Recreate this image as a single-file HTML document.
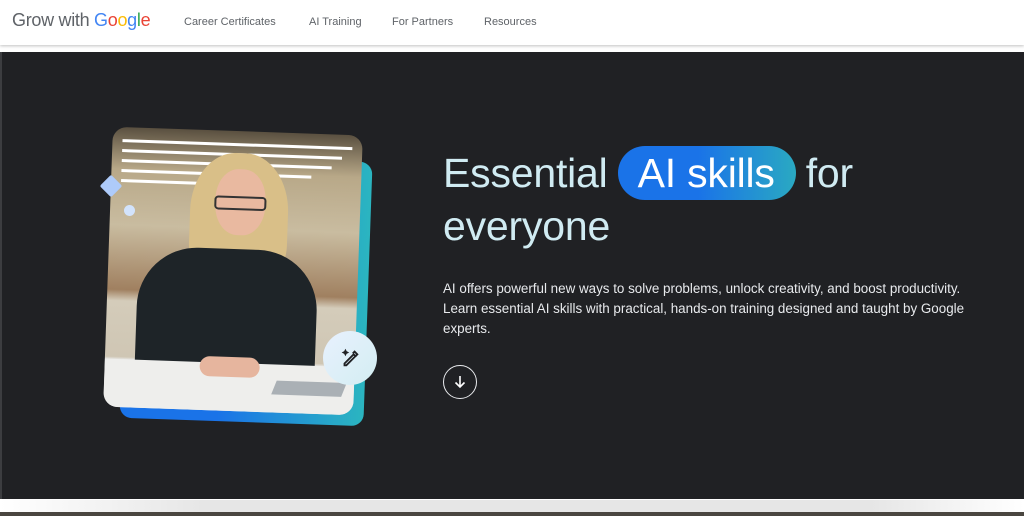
<!DOCTYPE html>
<html><head><meta charset="utf-8"><style>
*{margin:0;padding:0;box-sizing:border-box}
body{width:1024px;height:516px;overflow:hidden;background:#fff;font-family:"Liberation Sans",sans-serif;position:relative}
.hdr{position:absolute;left:0;top:0;width:1024px;height:45px;background:#fff;box-shadow:0 1px 3px rgba(0,0,0,.25)}
.logo{position:absolute;left:12px;top:10px;font-size:18px;color:#5f6368;letter-spacing:-.3px}
.logo b{font-weight:normal}
.nav{position:absolute;top:16px;font-size:11px;color:#5f6368}
.hero{position:absolute;left:0;top:52px;width:1024px;height:447px;background:#202124;border-left:2px solid #3c3d40}
.bot{position:absolute;left:0;top:500px;width:1024px;height:12px;background:linear-gradient(90deg,#fff 0,#e6e6e6 20%,#e6e6e6 85%,#fff 100%);border-radius:4px 0 0 4px}
.bot2{position:absolute;left:0;top:512px;width:1024px;height:4px;background:#4a4640}
.back{position:absolute;left:124px;top:158px;width:244px;height:264px;border-radius:12px;background:linear-gradient(90deg,#1a73e8 0%,#1a73e8 40%,#2bb5c0 100%);transform:rotate(2deg)}
.photo{position:absolute;left:108px;top:131px;width:250px;height:280px;border-radius:14px;overflow:hidden;transform:rotate(2deg);background:linear-gradient(180deg,#5a5040 0%,#b8a888 15%,#c9bca0 35%,#a08060 58%,#d4ccba 62%,#cfc6b4 82%,#e9e9e8 83%,#f0f0ef 100%)}
.light{position:absolute;height:3px;background:#fff;left:10px}
.hair{position:absolute;left:80px;top:22px;width:98px;height:130px;border-radius:45% 45% 30% 30%;background:#d9bf88}
.face{position:absolute;left:105px;top:38px;width:50px;height:66px;border-radius:45%;background:#e9b9a0}
.glass{position:absolute;left:104px;top:65px;width:52px;height:14px;border:2px solid #333;border-radius:4px}
.body{position:absolute;left:30px;top:118px;width:180px;height:150px;border-radius:60px 60px 10px 10px;background:#1e2428}
.table{position:absolute;left:0;top:232px;width:250px;height:60px;background:#eeeeec}
.hands{position:absolute;left:95px;top:226px;width:60px;height:20px;border-radius:10px;background:#e6b59e}
.lap{position:absolute;left:170px;top:248px;width:70px;height:14px;background:#aab0b5;transform:skewX(-20deg)}
.dia{position:absolute;left:103px;top:178px;width:16px;height:16px;background:#aecbfa;transform:rotate(45deg);border-radius:2px}
.dot{position:absolute;left:124px;top:205px;width:11px;height:11px;border-radius:50%;background:#d2e3fc}
.magic{position:absolute;left:323px;top:331px;width:54px;height:54px;border-radius:50%;background:linear-gradient(135deg,#e8f0fe,#d3eef2);display:flex;align-items:center;justify-content:center}
h1{position:absolute;left:443px;top:146px;font-weight:normal;font-size:41px;line-height:53px;color:#d0ebf2;letter-spacing:-.2px;white-space:nowrap}
.pill{display:inline-block;background:linear-gradient(90deg,#1a73e8 0%,#1a73e8 45%,#2aa9c2 100%);color:#fff;border-radius:28px;padding:0 21px 0 20px;line-height:54px;margin:0 10px 0 10px}
p{position:absolute;left:443px;top:279px;width:530px;font-size:13.4px;line-height:20px;color:#e8eaed}
.down{position:absolute;left:443px;top:365px;width:34px;height:34px;border:1.5px solid #e8eaed;border-radius:50%;display:flex;align-items:center;justify-content:center}
</style></head><body>
<div class="hdr">
<div class="logo">Grow with <b style="color:#4285f4">G</b><b style="color:#ea4335">o</b><b style="color:#fbbc05">o</b><b style="color:#4285f4">g</b><b style="color:#34a853">l</b><b style="color:#ea4335">e</b></div>
<div class="nav" style="left:184px">Career Certificates</div>
<div class="nav" style="left:309px">AI Training</div>
<div class="nav" style="left:392px">For Partners</div>
<div class="nav" style="left:484px">Resources</div>
</div>
<div class="hero"></div>
<div class="back"></div>
<div class="photo">
<div class="light" style="top:12px;width:230px"></div><div class="light" style="top:22px;width:220px"></div><div class="light" style="top:32px;width:210px"></div><div class="light" style="top:42px;width:190px"></div><div class="light" style="top:52px;width:120px"></div>
<div class="hair"></div><div class="face"></div><div class="glass"></div>
<div class="body"></div><div class="table"></div><div class="hands"></div><div class="lap"></div>
</div>
<div class="dia"></div><div class="dot"></div>
<div class="magic"><svg width="22" height="22" viewBox="0 0 24 24" fill="none" stroke="#202124" stroke-width="2"><path d="M6 20l10-10 2 2-10 10H6z" transform="translate(0,-2)"/><path d="M15 7l2-2 3 3-2 2" /><path d="M7 3l1 2 2 1-2 1-1 2-1-2-2-1 2-1z" fill="#202124" stroke-width="1"/></svg></div>
<h1>Essential<span class="pill">AI skills</span>for<br>everyone</h1>
<p>AI offers powerful new ways to solve problems, unlock creativity, and boost productivity. Learn essential AI skills with practical, hands-on training designed and taught by Google experts.</p>
<div class="down"><svg width="14" height="14" viewBox="0 0 14 14" fill="none" stroke="#fff" stroke-width="1.6"><path d="M7 1v11M2.5 7.5L7 12l4.5-4.5"/></svg></div>
<div class="bot"></div><div class="bot2"></div>
</body></html>
